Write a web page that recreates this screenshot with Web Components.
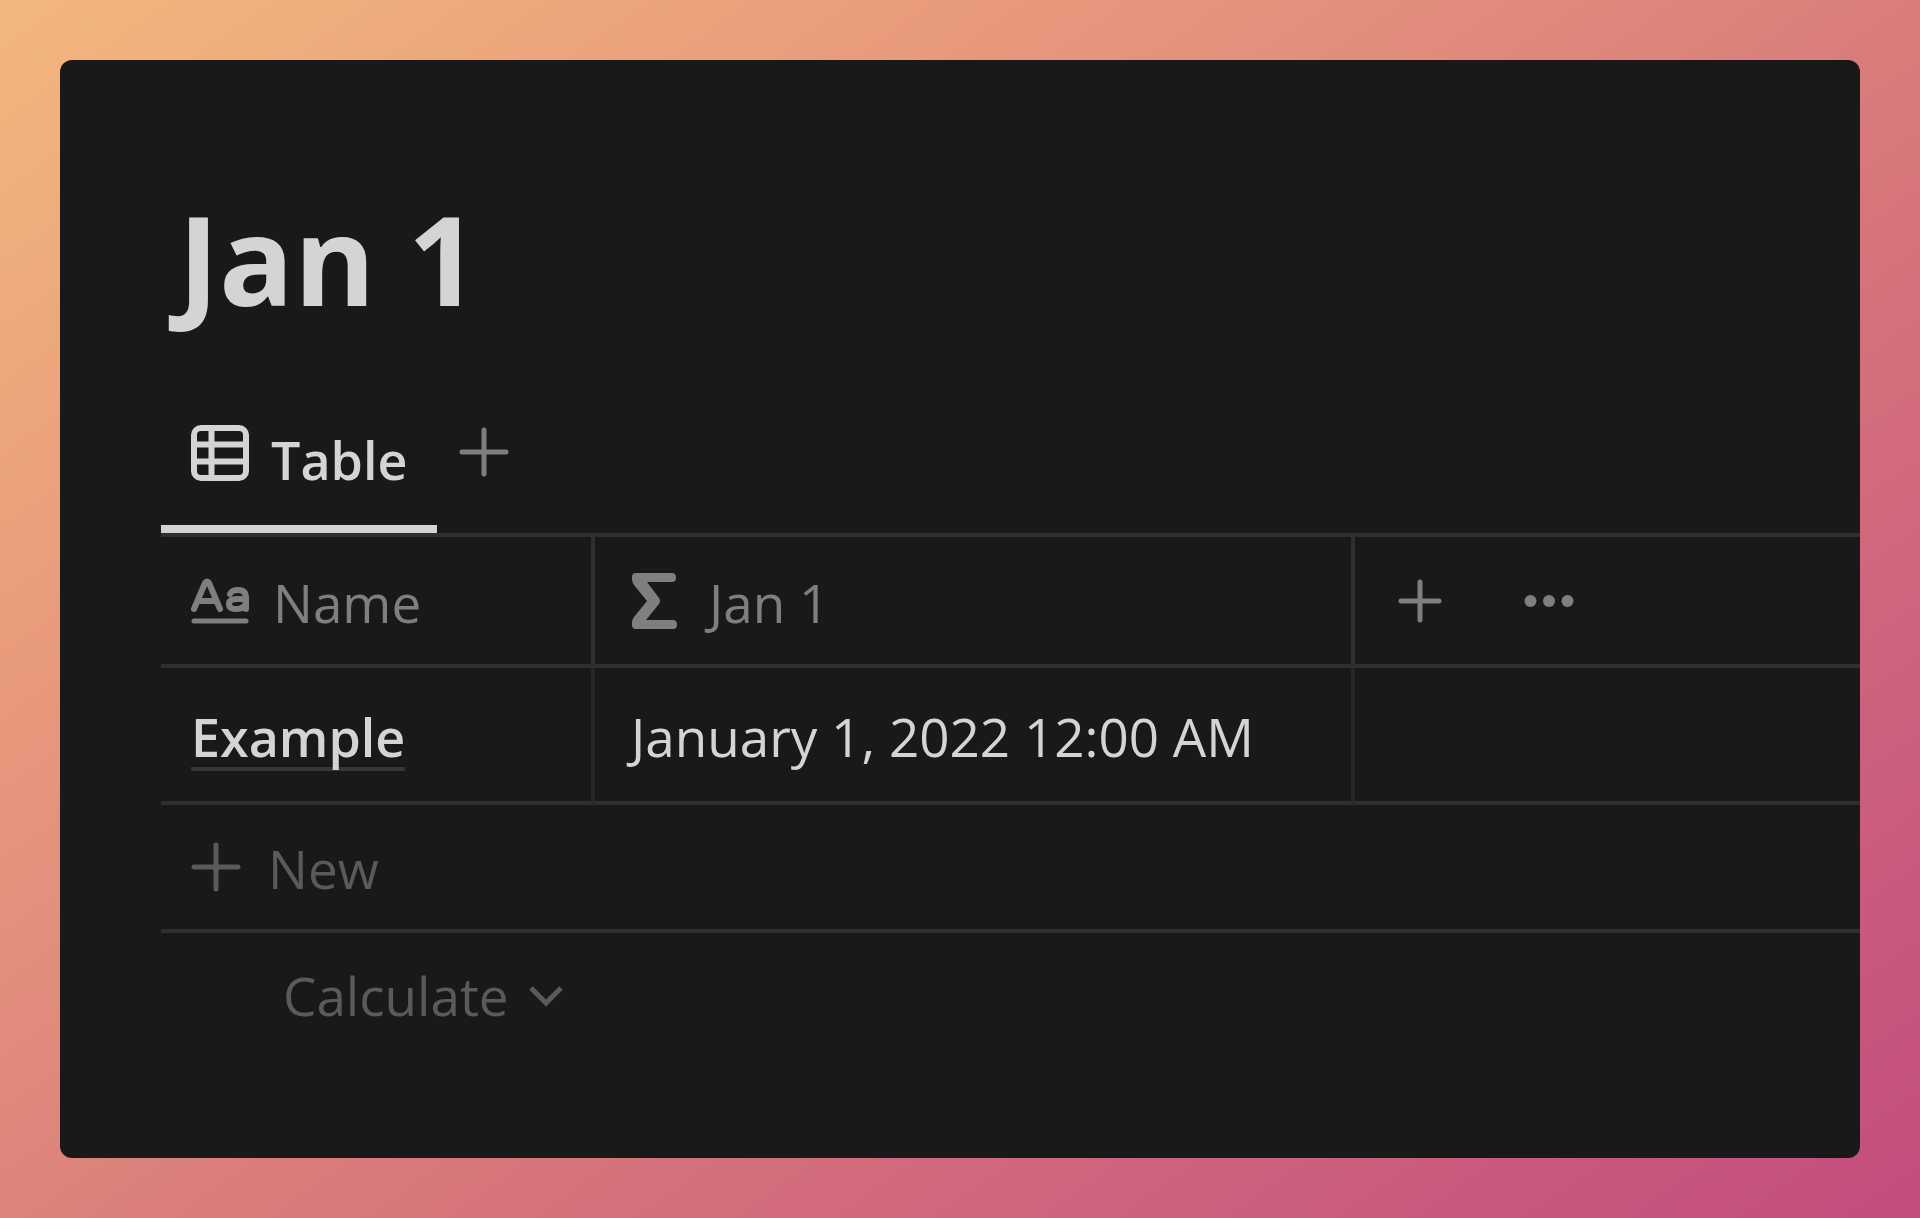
<!DOCTYPE html>
<html lang="en">
<head>
<meta charset="utf-8">
<title>Jan 1</title>
<style>
  html, body { margin: 0; min-height: 100%; }
  body {
    display: flex;
    min-height: 100vh;
    box-sizing: border-box;
    padding: 60px;
    background: linear-gradient(145deg, #f3b77d 0%, #e8997c 28%, #de877c 45%, #d97d7b 53%, #d0677d 73%, #c34c7d 100%);
    font-family: "Open Sans", "Noto Sans", sans-serif;
  }
</style>
</head>
<body>
<database-page>
  <span slot="title">Jan 1</span>
  <view-tabs>Table</view-tabs>
  <data-table></data-table>
</database-page>

<script>
const shapes = {
  table: [58, 58, '<g fill="none" stroke="currentColor" stroke-width="6"><rect x="3" y="4" width="52" height="50" rx="7"/><path d="M20.500 4v50M3 20.500h52M3 37.500h52"/></g>'],
  plus: [50, 50, '<path d="M3 25h44M25 3v44" fill="none" stroke="currentColor" stroke-width="5" stroke-linecap="round"/>'],
  'plus-small': [44, 44, '<path d="M3 22h38M22 3v38" fill="none" stroke="currentColor" stroke-width="5" stroke-linecap="round"/>'],
  title: [58, 46, '<g fill="none" stroke="currentColor" stroke-width="6" stroke-linecap="round" stroke-linejoin="round"><path d="M3 31L14 5Q16 2 18 5L29 31M8 23H24"/><path d="M39 16Q41 12 47 12Q55 12 55 20V31M55 21H46Q38 21 38 26Q38 31 45 31Q55 31 55 23"/><path d="M3 43h52" stroke-width="5"/></g>'],
  formula: [46, 56, '<path d="M5 0H41Q45 0 45 4.500Q45 9 41 9H16L28 25Q30 28 28 31L15 47H42Q46 47 46 51.500Q46 56 42 56H5Q1 56 1 52V49Q1 47 3 44L16 28L3 12Q1 9 1 6V4Q1 0 5 0Z" fill="currentColor"/>'],
  dots: [50, 12, '<g fill="currentColor"><circle cx="6.500" cy="6" r="6"/><circle cx="25" cy="6" r="6"/><circle cx="43.500" cy="6" r="6"/></g>'],
  chevron: [34, 22, '<path d="M2 3L17 18L32 3" fill="none" stroke="currentColor" stroke-width="5"/>']
};

customElements.define('ui-icon', class extends HTMLElement {
  connectedCallback() {
    const [w, h, body] = shapes[this.getAttribute('name')];
    this.attachShadow({ mode: 'open' }).innerHTML = `
      <style>:host { display: block; flex: none } svg { display: block }</style>
      <svg width="${w}" height="${h}" viewBox="0 0 ${w} ${h}" aria-hidden="true">${body}</svg>`;
  }
});

customElements.define('database-page', class extends HTMLElement {
  connectedCallback() {
    this.attachShadow({ mode: 'open' }).innerHTML = `
      <style>
        :host {
          display: block; flex: 1; box-sizing: border-box; min-width: 0;
          padding: 118px 0 0 101px; border-radius: 12px; overflow: hidden;
          background: #191919; color: #d4d4d4;
        }
        h1 { margin: 0 0 78px; padding-left: 17px; font-size: 124px; line-height: 160px; font-weight: 700; }
      </style>
      <h1><slot name="title"></slot></h1>
      <slot></slot>`;
  }
});

customElements.define('view-tabs', class extends HTMLElement {
  connectedCallback() {
    this.attachShadow({ mode: 'open' }).innerHTML = `
      <style>
        :host { display: block; border-bottom: 4px solid #2f2f2f; }
        nav { display: flex; height: 117px; }
        button { border: 0; background: none; font: inherit; color: inherit; display: flex; padding: 0; }
        .tab {
          box-sizing: border-box; padding: 8px 30px 0; gap: 22px;
          border-bottom: 8px solid #d4d4d4; font-size: 52px; line-height: 72px; font-weight: 600;
        }
        .add { color: #7f7f7f; padding: 11px 22px; }
      </style>
      <nav>
        <button class="tab"><ui-icon name="table"></ui-icon><span><slot></slot></span></button>
        <button class="add" aria-label="Add view"><ui-icon name="plus"></ui-icon></button>
      </nav>`;
  }
});

customElements.define('data-table', class extends HTMLElement {
  connectedCallback() {
    this.attachShadow({ mode: 'open' }).innerHTML = `
      <style>
        :host { display: block; font-size: 53px; line-height: 72px; }
        table { width: 100%; border-collapse: separate; border-spacing: 0; table-layout: fixed; }
        .name { width: 434px; }
        .date { width: 760px; }
        th, td { padding: 0 30px; text-align: left; border-bottom: 4px solid #2f2f2f; box-sizing: border-box; }
        th { height: 131px; font-weight: 400; color: #7f7f7f; }
        td { height: 137px; padding-top: 4px; }
        th:not(:last-child) { border-right: 4px solid #2f2f2f; }
        td:not(:last-child) { border-right: 4px solid #252525; }
        th:nth-child(2) { padding-left: 36px; }
        td:nth-child(2) { padding-left: 36px; padding-right: 0; }
        span { padding-top: 4px; }
        .label { display: flex; align-items: center; gap: 24px; }
        .label.formula { gap: 32px; }
        .tools { display: flex; align-items: center; gap: 82px; padding-left: 13px; }
        button { display: flex; align-items: center; border: 0; padding: 0; background: none; font: inherit; color: inherit; }
        a { color: inherit; font-size: 52px; font-weight: 600; text-decoration: none; display: inline-block; line-height: 60px; border-bottom: 4px solid #373737; }
        .new { box-sizing: border-box; width: 100%; height: 128px; gap: 27px; padding: 0 30px; color: #5a5a5a; border-bottom: 4px solid #2f2f2f; }
        .calc { height: 126px; margin-left: 122px; gap: 20px; color: #5a5a5a; }
      </style>
      <table>
        <colgroup><col class="name"><col class="date"><col></colgroup>
        <thead><tr>
          <th scope="col"><div class="label"><ui-icon name="title"></ui-icon><span>Name</span></div></th>
          <th scope="col"><div class="label formula"><ui-icon name="formula"></ui-icon><span>Jan 1</span></div></th>
          <th><div class="tools">
            <button aria-label="Add property"><ui-icon name="plus-small"></ui-icon></button>
            <button aria-label="More"><ui-icon name="dots"></ui-icon></button>
          </div></th>
        </tr></thead>
        <tbody><tr>
          <td><a href="#example">Example</a></td>
          <td>January 1, 2022 12:00 AM</td>
          <td></td>
        </tr></tbody>
      </table>
      <button class="new"><ui-icon name="plus"></ui-icon><span>New</span></button>
      <button class="calc">Calculate<ui-icon name="chevron"></ui-icon></button>`;
  }
});
</script>
</body>
</html>
